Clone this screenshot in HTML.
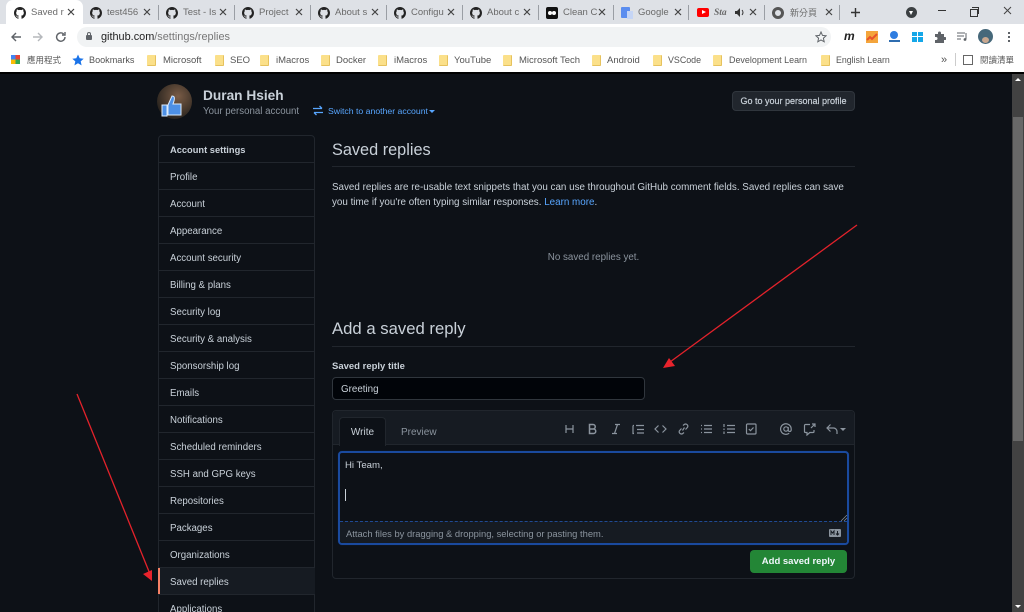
<!DOCTYPE html>
<html><head><meta charset="utf-8"><style>
html,body{margin:0;padding:0;width:1024px;height:612px;overflow:hidden;background:#0d1117;font-family:"Liberation Sans","Noto Sans CJK TC",sans-serif}
#w{position:absolute;left:0;top:0;width:1024px;height:612px;overflow:hidden;filter:blur(.35px)}
.a{position:absolute;white-space:nowrap}
#chrome{position:absolute;left:0;top:0;width:1024px;height:73px;background:#fff}
.tabbar{position:absolute;left:0;top:0;width:1024px;height:24px;background:#dee1e6}
.tab{position:absolute;top:5px;font-size:9.5px;color:#6a6a6a;height:16px;line-height:16px;white-space:nowrap}
.x{position:absolute;top:8px;width:8px;height:8px}
.sep{position:absolute;top:5px;width:1px;height:15px;background:#9a9ea4}
.bm{position:absolute;top:54px;font-size:9.5px;color:#555;line-height:13px;white-space:nowrap}
.fd{position:absolute;top:55px;width:8px;height:10px;background:#fbe08a;border:0 solid #e6c25e;border-width:0 1px 1px 0;border-radius:1px}
.nav{position:absolute;left:158px;width:157px;height:26px;border-top:1px solid #21262d;color:#c9d1d9;font-size:9.7px;line-height:29px;text-indent:12px;white-space:nowrap}
svg.i{position:absolute;fill:none;stroke:#8b949e;stroke-width:1.2}
</style></head><body><div id="w">
<div id="chrome">
<div class="tabbar"></div>
<div class="a" style="left:6px;top:0;width:77px;height:24px;background:#fff;border-radius:7px 7px 0 0"></div>
<svg width="0" height="0" style="position:absolute"><defs><symbol id="gh" viewBox="0 0 16 16"><path fill="#222" d="M8 0C3.58 0 0 3.58 0 8c0 3.54 2.29 6.53 5.47 7.59.4.07.55-.17.55-.38v-1.34c-2.23.48-2.7-1.07-2.7-1.07-.36-.92-.89-1.17-.89-1.17-.73-.5.05-.49.05-.49.8.06 1.23.83 1.23.83.71 1.22 1.87.87 2.33.66.07-.52.28-.87.51-1.07-1.78-.2-3.64-.89-3.64-3.95 0-.87.31-1.59.82-2.15-.08-.2-.36-1.02.08-2.12 0 0 .67-.21 2.2.82a7.6 7.6 0 0 1 4 0c1.53-1.04 2.2-.82 2.2-.82.44 1.1.16 1.92.08 2.12.51.56.82 1.27.82 2.15 0 3.07-1.87 3.75-3.65 3.95.29.25.54.73.54 1.48v2.2c0 .21.15.46.55.38A8 8 0 0 0 16 8c0-4.42-3.58-8-8-8z"/></symbol><symbol id="cx" viewBox="0 0 8 8"><path d="M1 1l6 6M7 1L1 7" stroke="#444" stroke-width="1.200" fill="none"/></symbol></defs></svg>
<svg class="a" style="left:14px;top:7px" width="12" height="12"><use href="#gh"/></svg><div class="tab" style="left:31px">Saved r</div><svg class="x" style="left:67px"><use href="#cx"/></svg>
<svg class="a" style="left:90px;top:7px" width="12" height="12"><use href="#gh"/></svg><div class="tab" style="left:107px">test456</div><svg class="x" style="left:143px"><use href="#cx"/></svg><div class="sep" style="left:158px"></div>
<svg class="a" style="left:166px;top:7px" width="12" height="12"><use href="#gh"/></svg><div class="tab" style="left:183px">Test - Is</div><svg class="x" style="left:219px"><use href="#cx"/></svg><div class="sep" style="left:234px"></div>
<svg class="a" style="left:242px;top:7px" width="12" height="12"><use href="#gh"/></svg><div class="tab" style="left:259px">Project</div><svg class="x" style="left:295px"><use href="#cx"/></svg><div class="sep" style="left:310px"></div>
<svg class="a" style="left:318px;top:7px" width="12" height="12"><use href="#gh"/></svg><div class="tab" style="left:335px">About s</div><svg class="x" style="left:371px"><use href="#cx"/></svg><div class="sep" style="left:386px"></div>
<svg class="a" style="left:394px;top:7px" width="12" height="12"><use href="#gh"/></svg><div class="tab" style="left:411px">Configu</div><svg class="x" style="left:447px"><use href="#cx"/></svg><div class="sep" style="left:462px"></div>
<svg class="a" style="left:470px;top:7px" width="12" height="12"><use href="#gh"/></svg><div class="tab" style="left:487px">About c</div><svg class="x" style="left:523px"><use href="#cx"/></svg><div class="sep" style="left:538px"></div>
<div class="a" style="left:546px;top:7px;width:12px;height:12px;background:#111;border-radius:2px"></div><div class="a" style="left:548px;top:11px;width:4px;height:4px;background:#fff;border-radius:50%"></div><div class="a" style="left:552px;top:11px;width:4px;height:4px;background:#fff;border-radius:50%"></div>
<div class="tab" style="left:563px">Clean C</div><svg class="x" style="left:598px"><use href="#cx"/></svg><div class="sep" style="left:613px"></div>
<div class="a" style="left:621px;top:7px;width:9px;height:11px;background:#5b8def;border-radius:1px"></div><div class="a" style="left:627px;top:11px;width:6px;height:8px;background:#c5d5f5"></div>
<div class="tab" style="left:638px">Google</div><svg class="x" style="left:674px"><use href="#cx"/></svg><div class="sep" style="left:688px"></div>
<div class="a" style="left:697px;top:8px;width:12px;height:9px;background:#f00;border-radius:2px"></div><div class="a" style="left:702px;top:10px;border-left:4px solid #fff;border-top:2.5px solid transparent;border-bottom:2.5px solid transparent"></div>
<div class="tab" style="left:714px;font-style:italic;font-weight:bold;font-family:'Liberation Serif',serif">Sta</div>
<svg class="a" style="left:735px;top:8px" width="10" height="9"><path d="M0 3h2l3-3v9L2 6H0z" fill="#333"/><path d="M7 2q2 2.500 0 5" stroke="#333" fill="none"/></svg><svg class="x" style="left:749px"><use href="#cx"/></svg><div class="sep" style="left:764px"></div>
<div class="a" style="left:772px;top:7px;width:6px;height:6px;border:3px solid #555;border-radius:50%"></div>
<div class="tab" style="left:790px;font-size:9px">新分頁</div><svg class="x" style="left:825px"><use href="#cx"/></svg><div class="sep" style="left:839px"></div>
<svg class="a" style="left:850px;top:7px" width="11" height="11"><path d="M5.500 1v9M1 5.500h9" stroke="#333" stroke-width="1.400"/></svg>
<div class="a" style="left:906px;top:7px;width:11px;height:11px;background:#3c4043;border-radius:50%"></div><div class="a" style="left:909px;top:11px;border-top:4px solid #fff;border-left:2.500px solid transparent;border-right:2.500px solid transparent"></div>
<div class="a" style="left:938px;top:10px;width:8px;height:1px;background:#333"></div>
<div class="a" style="left:970px;top:9px;width:6px;height:6px;border:1px solid #333"></div><div class="a" style="left:972px;top:7px;width:6px;height:6px;border-top:1px solid #333;border-right:1px solid #333"></div>
<svg class="a" style="left:1002px;top:5px" width="11" height="11"><path d="M2 2l7 7M9 2l-7 7" stroke="#444"/></svg>

<div class="a" style="left:0;top:24px;width:1024px;height:25px;background:#fff"></div>
<svg class="a" style="left:10px;top:31px" width="12" height="12"><path d="M11 6H2M6 2L2 6l4 4" stroke="#5f6368" stroke-width="1.400" fill="none"/></svg>
<svg class="a" style="left:32px;top:31px" width="12" height="12"><path d="M1 6h9M6 2l4 4-4 4" stroke="#b5b8bc" stroke-width="1.400" fill="none"/></svg>
<svg class="a" style="left:55px;top:31px" width="12" height="12"><path d="M10 6a4.200 4.200 0 1 1-1.300-3M10 1v3H7" stroke="#5f6368" stroke-width="1.400" fill="none"/></svg>
<div class="a" style="left:77px;top:27px;width:754px;height:20px;background:#f1f3f4;border-radius:10px"></div>
<div class="a" style="left:86px;top:35px;width:6px;height:5px;background:#5f6368;border-radius:1px"></div><div class="a" style="left:87px;top:32px;width:2px;height:3px;border:1px solid #5f6368;border-bottom:0;border-radius:2px 2px 0 0"></div>
<div class="a" style="left:101px;top:30px;font-size:10.900px;line-height:14px;color:#777"><span style="color:#222">github.com</span>/settings/replies</div>
<svg class="a" style="left:815px;top:31px" width="12" height="12"><path d="M6 1l1.500 3.400 3.600.4-2.700 2.400.8 3.600L6 9l-3.200 1.800.8-3.600L.9 4.800l3.600-.4z" stroke="#5f6368" fill="none"/></svg>
<div class="a" style="left:844px;top:29px;font-size:12px;line-height:14px;font-weight:bold;font-style:italic;color:#222">m</div>
<div class="a" style="left:866px;top:31px;width:12px;height:12px;background:#f4a53c"></div><svg class="a" style="left:866px;top:31px" width="12" height="12"><path d="M1 9l3-3 2 2 5-5" stroke="#e8532b" stroke-width="2" fill="none"/></svg>
<div class="a" style="left:890px;top:31px;width:8px;height:8px;background:#2f7de0;border-radius:50%"></div><div class="a" style="left:889px;top:40px;width:11px;height:2px;background:#2f6db0"></div>
<div class="a" style="left:912px;top:32px;width:5px;height:4px;background:#15a7e8"></div><div class="a" style="left:918px;top:32px;width:5px;height:4px;background:#15a7e8"></div><div class="a" style="left:912px;top:37px;width:5px;height:5px;background:#15a7e8"></div><div class="a" style="left:918px;top:37px;width:5px;height:5px;background:#15a7e8"></div>
<svg class="a" style="left:934px;top:31px" width="12" height="12"><path fill="#5f6368" d="M1 3h3V2a1.500 1.500 0 0 1 3 0v1h3v3h1a1.500 1.500 0 0 1 0 3h-1v3H1V9h1a1.500 1.500 0 0 0 0-3H1z"/></svg>
<svg class="a" style="left:957px;top:32px" width="12" height="10"><path d="M0 1h8M0 4h7M0 7h4M9 1v6" stroke="#5f6368" fill="none"/><circle cx="8" cy="7.500" r="1.400" fill="#5f6368"/></svg>
<div class="a" style="left:978px;top:29px;width:15px;height:15px;background:#46687a;border-radius:50%"></div><div class="a" style="left:982px;top:37px;width:7px;height:6px;background:#c9a890;border-radius:50%"></div>
<div class="a" style="left:1008px;top:32px;width:2px;height:2px;background:#5f6368;box-shadow:0 4px 0 #5f6368,0 8px 0 #5f6368"></div>

<div class="a" style="left:11px;top:55px;width:9px;height:9px;background:conic-gradient(#ea4335 25%,#34a853 0 50%,#fbbc05 0 75%,#4285f4 0)"></div>
<div class="bm" style="left:27px;font-size:8.500px">應用程式</div>
<svg class="a" style="left:72px;top:54px" width="12" height="12"><path d="M6 .5l1.700 3.800 4 .4-3 2.700.9 4L6 9.300l-3.600 2.100.9-4-3-2.700 4-.4z" fill="#1a73e8"/></svg>
<div class="bm" style="left:89px;font-size:9.100px">Bookmarks</div>
<div class="fd" style="left:147px"></div><div class="bm" style="left:163px">Microsoft</div>
<div class="fd" style="left:215px"></div><div class="bm" style="left:230px">SEO</div>
<div class="fd" style="left:260px"></div><div class="bm" style="left:276px">iMacros</div>
<div class="fd" style="left:321px"></div><div class="bm" style="left:336px">Docker</div>
<div class="fd" style="left:378px"></div><div class="bm" style="left:394px">iMacros</div>
<div class="fd" style="left:439px"></div><div class="bm" style="left:454px">YouTube</div>
<div class="fd" style="left:503px"></div><div class="bm" style="left:519px">Microsoft Tech</div>
<div class="fd" style="left:592px"></div><div class="bm" style="left:607px">Android</div>
<div class="fd" style="left:653px"></div><div class="bm" style="left:668px;font-size:8.900px">VSCode</div>
<div class="fd" style="left:713px"></div><div class="bm" style="left:729px;font-size:8.950px">Development Learn</div>
<div class="fd" style="left:821px"></div><div class="bm" style="left:836px;font-size:8.800px">English Learn</div>
<div class="bm" style="left:941px;font-size:11px">»</div>
<div class="a" style="left:955px;top:53px;width:1px;height:13px;background:#ccc"></div>
<div class="a" style="left:963px;top:55px;width:8px;height:8px;border:1px solid #666"></div>
<div class="bm" style="left:980px;font-size:8.500px">閱讀清單</div>
</div>
<div class="a" style="left:0;top:72px;width:1024px;height:2px;background:#000"></div>

<!-- header -->
<div class="a" style="left:157px;top:84px;width:35px;height:35px;border-radius:50%;background:radial-gradient(circle at 60% 35%,#7a5c46,#2c2620 72%)"></div>
<svg class="a" style="left:161px;top:95px" width="22" height="22"><path d="M1 10h5v11H1zM7 10l4-9c2 0 3 1 2 5l-1 3h8v11H7z" fill="#4d90e6" stroke="#dcebfc"/></svg>
<div class="a" style="left:203px;top:87px;font-size:13.700px;line-height:17px;font-weight:bold;color:#c9d1d9">Duran Hsieh</div>
<div class="a" style="left:203px;top:105px;font-size:9.700px;line-height:13px;color:#8b949e">Your personal account</div>
<svg class="a" style="left:313px;top:105px;stroke:#58a6ff;fill:none" width="10" height="11"><path d="M0 3.500h9M6.500 1l2.500 2.500M10 7.500H1M3.500 10L1 7.500" stroke-width="1.300"/></svg>
<div class="a" style="left:328px;top:105px;font-size:8.700px;line-height:13px;color:#58a6ff">Switch to another account</div>
<div class="a" style="left:429px;top:110px;border-top:3px solid #58a6ff;border-left:3px solid transparent;border-right:3px solid transparent"></div>
<div class="a" style="left:732px;top:91px;width:123px;height:20px;box-sizing:border-box;background:#21262d;border:1px solid #30363d;border-radius:4px;text-align:center;font-size:9px;line-height:19px;color:#c9d1d9;-webkit-text-stroke:.2px #c9d1d9">Go to your personal profile</div>

<!-- sidebar -->
<div class="a" style="left:158px;top:135px;width:157px;height:490px;box-sizing:border-box;border:1px solid #21262d;border-radius:4px"></div>
<div class="a" style="left:170px;top:143px;font-size:9.300px;line-height:14px;font-weight:bold;color:#c9d1d9">Account settings</div>
<div class="nav" style="top:162px">Profile</div>
<div class="nav" style="top:189px">Account</div>
<div class="nav" style="top:216px">Appearance</div>
<div class="nav" style="top:243px">Account security</div>
<div class="nav" style="top:270px">Billing &amp; plans</div>
<div class="nav" style="top:297px">Security log</div>
<div class="nav" style="top:324px">Security &amp; analysis</div>
<div class="nav" style="top:351px">Sponsorship log</div>
<div class="nav" style="top:378px">Emails</div>
<div class="nav" style="top:405px">Notifications</div>
<div class="nav" style="top:432px">Scheduled reminders</div>
<div class="nav" style="top:459px">SSH and GPG keys</div>
<div class="nav" style="top:486px">Repositories</div>
<div class="nav" style="top:513px">Packages</div>
<div class="nav" style="top:540px">Organizations</div>
<div class="nav" style="top:567px;background:#161b22">Saved replies</div>
<div class="a" style="left:158px;top:568px;width:2px;height:27px;background:#f78166"></div>
<div class="nav" style="top:594px">Applications</div>

<!-- main -->
<div class="a" style="left:332px;top:140px;font-size:16.300px;line-height:20px;color:#c9d1d9">Saved replies</div>
<div class="a" style="left:332px;top:166px;width:523px;height:1px;background:#21262d"></div>
<div class="a" style="left:332px;top:180px;font-size:9.830px;line-height:15px;color:#c9d1d9">Saved replies are re-usable text snippets that you can use throughout GitHub comment fields. Saved replies can save<br>you time if you're often typing similar responses. <span style="color:#58a6ff">Learn more</span>.</div>
<div class="a" style="left:332px;top:251px;width:523px;text-align:center;font-size:9.800px;line-height:13px;color:#8b949e">No saved replies yet.</div>
<div class="a" style="left:332px;top:319px;font-size:16.700px;line-height:20px;color:#c9d1d9">Add a saved reply</div>
<div class="a" style="left:332px;top:346px;width:523px;height:1px;background:#21262d"></div>
<div class="a" style="left:332px;top:360px;font-size:9.500px;line-height:14px;font-weight:bold;color:#c9d1d9">Saved reply title</div>
<div class="a" style="left:332px;top:377px;width:313px;height:23px;box-sizing:border-box;background:#010409;border:1px solid #30363d;border-radius:4px;padding-left:8px;font-size:9.800px;line-height:23px;color:#c9d1d9">Greeting</div>

<!-- editor -->
<div class="a" style="left:332px;top:410px;width:523px;height:169px;box-sizing:border-box;border:1px solid #21262d;border-radius:4px"></div>
<div class="a" style="left:333px;top:411px;width:521px;height:34px;background:#161b22;border-bottom:1px solid #21262d;border-radius:4px 4px 0 0;box-sizing:border-box"></div>
<div class="a" style="left:339px;top:417px;width:47px;height:29px;box-sizing:border-box;background:#0d1117;border:1px solid #21262d;border-bottom:0;border-radius:4px 4px 0 0;text-align:center;font-size:10px;line-height:30px;color:#c9d1d9">Write</div>
<div class="a" style="left:401px;top:425px;font-size:10px;line-height:15px;color:#8b949e">Preview</div>
<svg class="i" style="left:564px;top:423px" width="11" height="12"><path d="M2 2v8M9 2v8M2 6h7"/></svg>
<svg class="i" style="left:587px;top:423px" width="11" height="12"><path d="M2.500 1.500h3.500a2.200 2.200 0 0 1 0 4.500H2.500zM2.500 6h4a2.200 2.200 0 0 1 0 4.500h-4z" stroke-width="1.500"/></svg>
<svg class="i" style="left:610px;top:423px" width="11" height="12"><path d="M5 1.500h5M2 10.500h5M7.500 1.500L4.500 10.500"/></svg>
<svg class="i" style="left:632px;top:423px" width="12" height="12"><path d="M4 2.500h8M5 6.500h7M5 10h7M1 2.500h1M1 2.500v8h1"/></svg>
<svg class="i" style="left:654px;top:423px" width="13" height="12"><path d="M4.500 2.500L1 6l3.500 3.500M8.500 2.500L12 6l-3.500 3.500"/></svg>
<svg class="i" style="left:677px;top:423px" width="13" height="12"><path d="M5.500 7.500L7.500 4.500M6 2.500l1.500-1.200a2.200 2.200 0 0 1 3 3L8.500 6.500M7 9.500l-1.500 1.200a2.200 2.200 0 0 1-3-3L4.500 5.500"/></svg>
<svg class="i" style="left:700px;top:423px" width="12" height="12"><path d="M4 2.500h8M4 6h8M4 9.500h8M1 2.500h1M1 6h1M1 9.500h1"/></svg>
<svg class="i" style="left:723px;top:423px" width="12" height="12"><path d="M4 2.500h8M4 6h8M4 9.500h8M1 1v3M1 5.500v1.500M1 8.500v2.500"/></svg>
<svg class="i" style="left:745px;top:423px" width="13" height="12"><rect x="1.500" y="1" width="9.500" height="10" rx="1"/><path d="M3.800 6l1.700 1.700 3-3.200"/></svg>
<svg class="i" style="left:780px;top:423px" width="12" height="12"><circle cx="6" cy="6" r="2.200"/><path d="M8.200 4v3a1.500 1.500 0 0 0 3 0V6a5.300 5.300 0 1 0-2 4.200"/></svg>
<svg class="i" style="left:803px;top:423px" width="13" height="13"><path d="M7 1.500H2.500a1 1 0 0 0-1 1v6a1 1 0 0 0 1 1H4v2.500l2.800-2.500H10a1 1 0 0 0 1-1V7M9 1h3v3M12 1L8 5"/></svg>
<svg class="i" style="left:826px;top:423px" width="12" height="12"><path d="M4.500 1.500L1 5l3.500 3.500M1 5h6.500a3.500 3.500 0 0 1 3.500 3.500V11"/></svg>
<div class="a" style="left:840px;top:428px;border-top:3px solid #8b949e;border-left:3px solid transparent;border-right:3px solid transparent"></div>

<div class="a" style="left:338px;top:451px;width:511px;height:94px;box-sizing:border-box;border:2px solid #1a4a9e;border-radius:4px;background:#0d1117;box-shadow:0 0 1px #0d2a5c"></div>
<div class="a" style="left:340px;top:521px;width:507px;height:22px;background:#161b22;border-top:1px dashed #1f4a94;box-sizing:border-box;border-radius:0 0 3px 3px"></div>
<div class="a" style="left:345px;top:459px;font-size:9.600px;line-height:14px;color:#c9d1d9">Hi Team,</div>
<div class="a" style="left:345px;top:489px;width:1px;height:12px;background:#c9d1d9"></div>
<svg class="a" style="left:841px;top:515px" width="6" height="6"><path d="M0 6L6 0M3 6L6 3" stroke="#8b949e" stroke-width=".7"/></svg>
<div class="a" style="left:346px;top:527px;font-size:9.400px;line-height:14px;color:#8b949e">Attach files by dragging &amp; dropping, selecting or pasting them.</div>
<div class="a" style="left:829px;top:529px;width:12px;height:8px;background:#8b949e;border-radius:1px"></div>
<svg class="a" style="left:829px;top:529px" width="12" height="8"><path d="M2 6V2l1.500 2L5 2v4M8.500 2v3.500M7 4.500l1.500 1.500L10 4.500" stroke="#161b22" fill="none"/></svg>
<div class="a" style="left:750px;top:550px;width:97px;height:23px;background:#238636;border-radius:4px;text-align:center;font-size:9.500px;font-weight:bold;line-height:24px;color:#f0f6fc">Add saved reply</div>

<!-- arrows -->
<svg class="a" style="left:0;top:0" width="1012" height="612"><g stroke="#e3222b" stroke-width="1.300" fill="#e8232c"><path d="M857 225L670 362" fill="none"/><path d="M663 368l6-10 6 8z" stroke="none"/><path d="M77 394L150 574" fill="none"/><path d="M152 581l-9-7 9-4z" stroke="none"/></g></svg>

<!-- scrollbar -->
<div class="a" style="left:1012px;top:74px;width:12px;height:538px;background:#424242"></div>
<div class="a" style="left:1013px;top:117px;width:10px;height:324px;background:#686868"></div>
<div class="a" style="left:1015px;top:78px;border-bottom:3px solid #fff;border-left:3px solid transparent;border-right:3px solid transparent"></div>
<div class="a" style="left:1015px;top:605px;border-top:3px solid #fff;border-left:3px solid transparent;border-right:3px solid transparent"></div>
</div></body></html>
